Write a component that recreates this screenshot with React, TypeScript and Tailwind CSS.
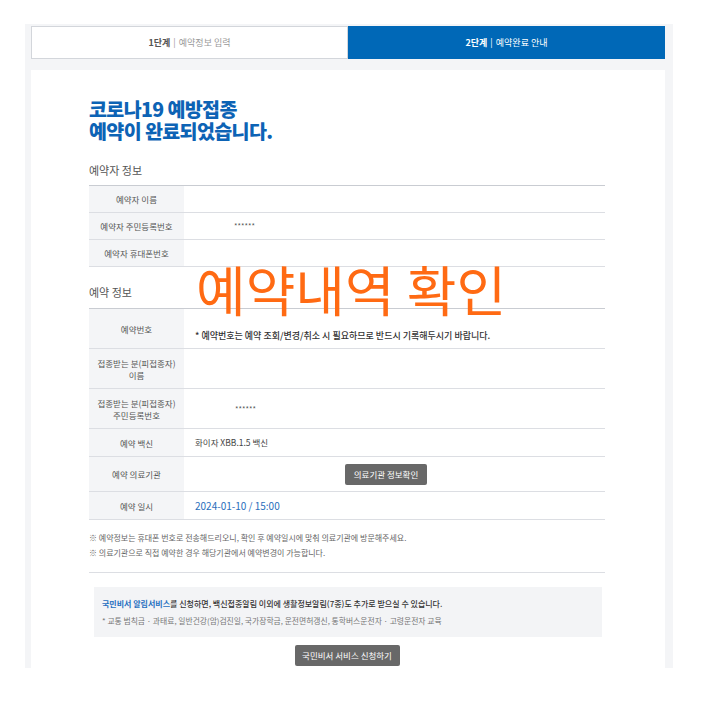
import { ReactNode } from "react";

function Row({
  label,
  h,
  children,
}: {
  label: ReactNode;
  h: string;
  children?: ReactNode;
}) {
  return (
    <div className={`flex w-full border-b border-[#dcdee3] ${h}`}>
      <div className="flex w-[95px] shrink-0 flex-col items-center justify-center bg-[#f4f5f7] text-center text-[8.5px] leading-[12px] text-[#555]">
        {label}
      </div>
      <div className="flex flex-1 items-center">{children}</div>
    </div>
  );
}

export default function App() {
  return (
    <div className="relative h-[710px] w-[702px] bg-white font-['Noto_Sans_CJK_KR','Noto_Sans',sans-serif]">
      <div className="h-[24px]" />
      <div className="ml-[25px] flex h-[644px] w-[648px] flex-col overflow-hidden bg-[#f4f5f7] pl-[6px] pr-[8px] pt-[2px]">
        {/* steps */}
        <div className="flex h-[33px] w-full shrink-0">
          <div className="flex w-1/2 items-center justify-center border border-[#d3d6db] bg-white text-[9px] text-[#999]">
            <span className="font-bold text-[#555]">1단계</span>
            <span className="mx-[3px]">|</span>
            <span>예약정보 입력</span>
          </div>
          <div className="flex w-1/2 items-center justify-center bg-[#0068b7] text-[9px] text-white">
            <span className="font-bold">2단계</span>
            <span className="mx-[3px]">|</span>
            <span>예약완료 안내</span>
          </div>
        </div>

        {/* card */}
        <div className="mt-[11px] flex-1 bg-white pl-[58px] pr-[60px] pt-[28px]">
          <div className="text-[19.5px] font-black leading-[22px] tracking-[-0.6px] text-[#0d63b5]">
            <div>코로나19 예방접종</div>
            <div>예약이 완료되었습니다.</div>
          </div>

          <div className="mt-[21px] text-[11px] leading-[14px] text-[#555]">예약자 정보</div>
          <div className="mt-[8px] border-t border-[#c9ccd2]">
            <Row label="예약자 이름" h="h-[27px]" />
            <Row label="예약자 주민등록번호" h="h-[27px]">
              <span className="pl-[50px] text-[7.5px] text-[#555]">******</span>
            </Row>
            <Row label="예약자 휴대폰번호" h="h-[27px]" />
          </div>

          <div className="mt-[18px] text-[11px] leading-[14px] text-[#555]">예약 정보</div>
          <div className="mt-[9px] border-t border-[#c9ccd2]">
            <Row label="예약번호" h="h-[40px]">
              <span className="pl-[11px] pt-[14px] text-[9px] font-medium text-[#333]">
                * 예약번호는 예약 조회/변경/취소 시 필요하므로 반드시 기록해두시기 바랍니다.
              </span>
            </Row>
            <Row
              label={
                <>
                  <span>접종받는 분(피접종자)</span>
                  <span>이름</span>
                </>
              }
              h="h-[40px]"
            />
            <Row
              label={
                <>
                  <span>접종받는 분(피접종자)</span>
                  <span>주민등록번호</span>
                </>
              }
              h="h-[40px]"
            >
              <span className="pl-[51px] text-[7.5px] text-[#555]">******</span>
            </Row>
            <Row label="예약 백신" h="h-[28px]">
              <span className="pl-[11px] text-[8.5px] text-[#444]">화이자 XBB.1.5 백신</span>
            </Row>
            <Row label="예약 의료기관" h="h-[35px]">
              <button className="ml-[161px] h-[21px] w-[82px] rounded-[2px] bg-[#686868] text-[8.5px] text-white">
                의료기관 정보확인
              </button>
            </Row>
            <Row label="예약 일시" h="h-[28px]">
              <span className="pl-[11px] text-[10px] text-[#2a6ebb]">2024-01-10 / 15:00</span>
            </Row>
          </div>

          <div className="mt-[10px] text-[8px] leading-[15px] text-[#666]">
            <p>{"※\uFE0E 예약정보는 휴대폰 번호로 전송해드리오니, 확인 후 예약일시에 맞춰 의료기관에 방문해주세요."}</p>
            <p>{"※\uFE0E 의료기관으로 직접 예약한 경우 해당기관에서 예약변경이 가능합니다."}</p>
          </div>

          <div className="mt-[12px] h-px bg-[#dcdee3]" />

          <div className="ml-[5px] mr-[3px] mt-[14px] flex h-[50px] flex-col justify-center gap-[4px] bg-[#f3f4f6] pl-[8px]">
            <p className="text-[8px] font-medium leading-[14px] text-[#333]">
              <span className="font-bold text-[#1f6fc0]">국민비서 알림서비스</span>를 신청하면, 백신접종알림 이외에 생활정보알림(7종)도 추가로 받으실 수 있습니다.
            </p>
            <p className="text-[7.8px] leading-[12px] text-[#777]">
              * 교통 범칙금 · 과태료, 일반건강(암)검진일, 국가장학금, 운전면허갱신, 통학버스운전자 · 고령운전자 교육
            </p>
          </div>

          <div className="mt-[8px] flex justify-center">
            <button className="h-[21px] w-[105px] rounded-[2px] bg-[#686868] text-[8.5px] text-white">
              국민비서 서비스 신청하기
            </button>
          </div>
        </div>
      </div>

      {/* annotation overlay */}
      <div className="absolute left-[196px] top-[262px] text-[54px] leading-none text-[#ff6a13]">
        예약내역 확인
      </div>
    </div>
  );
}
